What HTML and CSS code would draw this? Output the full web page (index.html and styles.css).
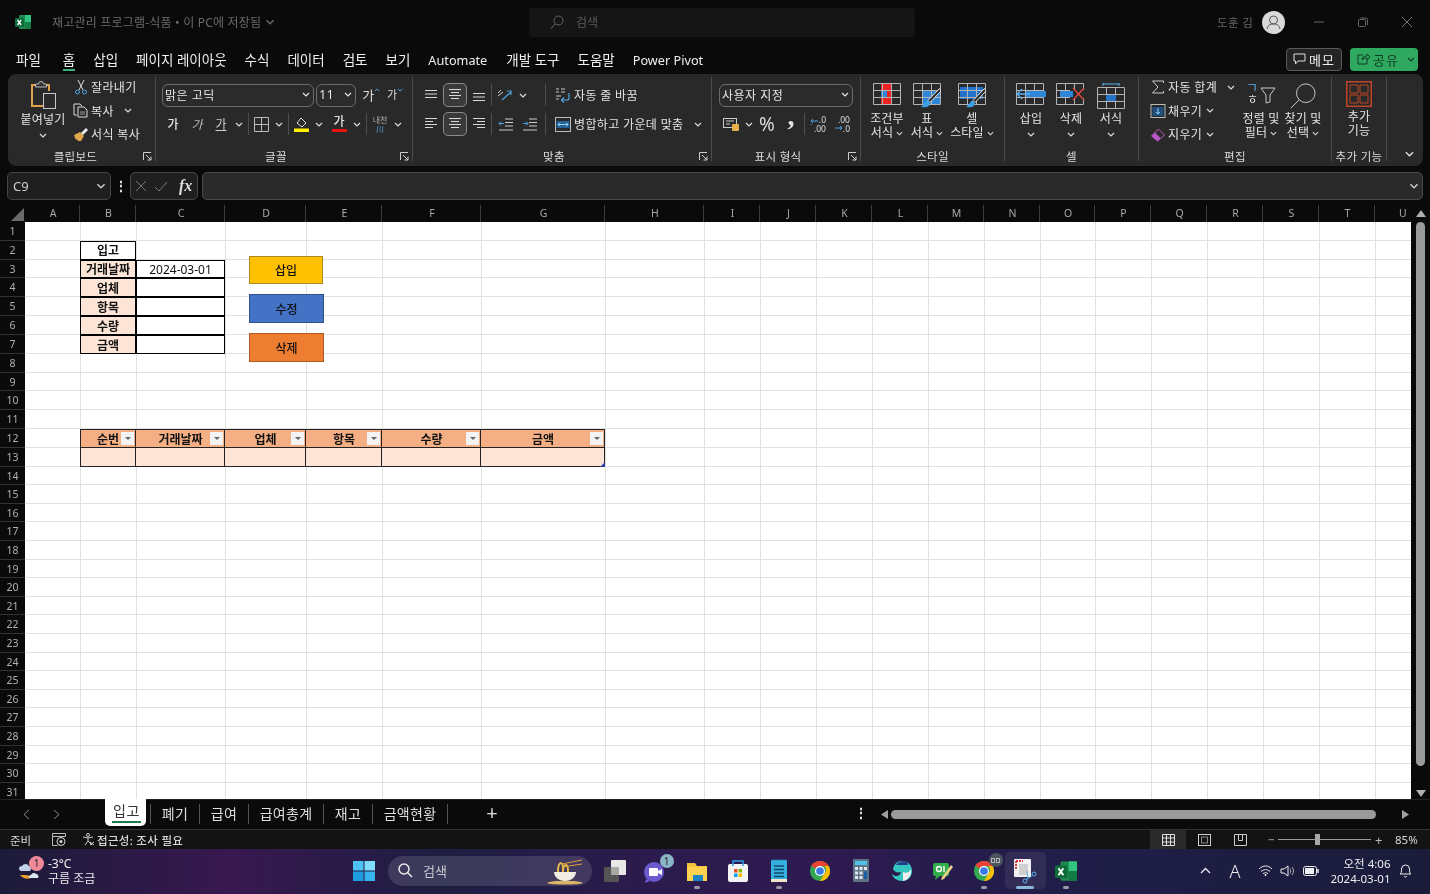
FILE: index.html
```html
<!DOCTYPE html>
<html lang="ko">
<head>
<meta charset="utf-8">
<title>재고관리 프로그램-식품</title>
<link rel="stylesheet" href="styles.css">
</head>
<body>
<svg class="defs" width="0" height="0" aria-hidden="true">
  <symbol id="ch" viewBox="0 0 8 5"><path d="M1 1l3 3 3-3" fill="none" stroke="currentColor" stroke-width="1.2"/></symbol>
  <symbol id="launch" viewBox="0 0 9 9"><path d="M.5 8V.5H8M3 3l5 5M8 4.5V8H4.500" fill="none" stroke="#cfcfcf"/></symbol>
  <symbol id="excel" viewBox="0 0 16 16"><rect x="4" y="1" width="12" height="14" rx="1" fill="#1f8a50"/><rect x="10" y="1" width="6" height="7" fill="#33c481"/><rect x="10" y="8" width="6" height="7" fill="#107c41"/><rect x="0" y="4" width="9" height="9" rx="1" fill="#0f6b39"/><path d="M2.500 6l3.600 5M6.100 6l-3.600 5" stroke="#fff" stroke-width="1.300"/></symbol>
  <symbol id="chrome" viewBox="0 0 24 24"><circle cx="12" cy="12" r="11" fill="#34a853"/><path d="M12 1a11 11 0 0 1 9.500 5.500H12a5.500 5.500 0 0 0-4.800 2.800L2.500 6A11 11 0 0 1 12 1z" fill="#ea4335"/><path d="M21.500 6.500A11 11 0 0 1 12 23l4.800-8.200a5.500 5.500 0 0 0 0-8.300z" fill="#fbbc04"/><circle cx="12" cy="12" r="5.500" fill="#fff"/><circle cx="12" cy="12" r="4.200" fill="#3b78e7"/></symbol>
  <symbol id="lines-t" viewBox="0 0 14 14"><path d="M1 2.500h12M1 6h12M1 9.500h12" stroke="#d8d8d8"/></symbol>
  <symbol id="lines-l" viewBox="0 0 14 14"><path d="M1 1.500h12M1 4.500h8M1 7.500h12M1 10.500h8" stroke="#d8d8d8"/></symbol>
  <symbol id="lines-c" viewBox="0 0 14 14"><path d="M1 1.500h12M3 4.500h8M1 7.500h12M3 10.500h8" stroke="#d8d8d8"/></symbol>
  <symbol id="lines-r" viewBox="0 0 14 14"><path d="M1 1.500h12M5 4.500h8M1 7.500h12M5 10.500h8" stroke="#d8d8d8"/></symbol>
  <symbol id="grid28" viewBox="0 0 28 22"><path d="M.5.500h27v21H.500zM9.500.500v21M18.500.500v21M.500 7.500h27M.500 14.500h27" fill="none" stroke="#b4b4b4"/></symbol>
  <symbol id="brush" viewBox="0 0 28 26"><path d="M26.500 5.500L15 17.500l2 2L28 8z" fill="#2a2a2a" stroke="#e4e4e4"/><path d="M15 17.500c-3 .5-3 4-7 6 4 2 9 .5 9-4z" fill="#3aa0ea"/></symbol>
</svg>

<div class="app">
  <header class="titlebar">
    <div class="tb-left">
      <svg class="tb-logo" width="16" height="16"><use href="#excel"/></svg>
      <span class="tb-title">재고관리 프로그램-식품 • 이 PC에 저장됨</span>
      <svg class="tb-ch" width="10" height="6"><use href="#ch"/></svg>
    </div>
    <div class="tb-search">
      <svg width="14" height="15" viewBox="0 0 14 15"><circle cx="8.500" cy="5.500" r="4.500" fill="none" stroke="#666"/><path d="M5 9l-4 5" stroke="#666"/></svg>
      <span>검색</span>
    </div>
    <div class="tb-right">
      <span class="tb-user">도훈 김</span>
      <svg class="tb-avatar" width="23" height="23" viewBox="0 0 23 23"><circle cx="11.500" cy="11.500" r="11.500" fill="#d9d9d9"/><circle cx="11.500" cy="9" r="4" fill="none" stroke="#555"/><path d="M5 18c1-4 3-5 6.500-5s5.500 1 6.500 5" fill="none" stroke="#555"/></svg>
      <svg class="win-btn" width="10" height="10" viewBox="0 0 10 10"><path d="M0 5h10" stroke="#666"/></svg>
      <svg class="win-btn" width="10" height="10" viewBox="0 0 10 10"><rect x=".5" y="2.500" width="7" height="7" rx="1" fill="none" stroke="#666"/><path d="M2.500 1h5.500a1.500 1.500 0 0 1 1.500 1.500V8" fill="none" stroke="#666"/></svg>
      <svg class="win-btn" width="10" height="10" viewBox="0 0 10 10"><path d="M0 0l10 10M10 0L0 10" stroke="#777"/></svg>
    </div>
  </header>

  <nav class="menubar">
    <span class="m-item m-file">파일</span>
    <span class="m-item m-home">홈</span>
    <span class="m-item">삽입</span>
    <span class="m-item">페이지 레이아웃</span>
    <span class="m-item">수식</span>
    <span class="m-item">데이터</span>
    <span class="m-item">검토</span>
    <span class="m-item">보기</span>
    <span class="m-item m-lat">Automate</span>
    <span class="m-item">개발 도구</span>
    <span class="m-item">도움말</span>
    <span class="m-item m-lat">Power Pivot</span>
    <span class="m-spacer"></span>
    <button class="memo"><svg width="13" height="12" viewBox="0 0 13 12"><path d="M1 1h11v7H5l-2.500 3V8H1z" fill="none" stroke="#ddd"/></svg>메모</button>
    <button class="share"><svg width="13" height="12" viewBox="0 0 13 12"><path d="M6 2H1v9h9V7M5 7c0-3 2-4 5-4V1l3 3-3 3V5C8 5 6 5 5 7z" fill="none" stroke="#0e3f22"/></svg>공유<svg class="share-ch" width="8" height="5"><use href="#ch"/></svg></button>
  </nav>

  <section class="ribbon">
    <div class="group g-clip">
      <div class="g-body clip-body">
        <div class="big paste">
          <svg width="27" height="30" viewBox="0 0 27 30"><path d="M5 4H2v21h14" fill="none" stroke="#dca24b" stroke-width="2"/><path d="M15 4h4v6" fill="none" stroke="#dca24b" stroke-width="2"/><path d="M5.500 6V3h3a2.500 2.500 0 0 1 5 0h3v3z" fill="#333" stroke="#bbb"/><rect x="13.500" y="12.500" width="12" height="15" fill="#2b2b2b" stroke="#c8c8c8"/></svg>
          <span class="big-label">붙여넣기</span>
          <svg class="big-ch" width="8" height="5"><use href="#ch"/></svg>
        </div>
        <div class="small-col">
          <div class="small"><svg width="16" height="16" viewBox="0 0 14 16"><path d="M4 1l5 10M10 1L5 11" stroke="#ddd"/><circle cx="3.500" cy="13" r="2" fill="none" stroke="#4fa3e0"/><circle cx="10.500" cy="13" r="2" fill="none" stroke="#4fa3e0"/></svg>잘라내기</div>
          <div class="small"><svg width="16" height="15" viewBox="0 0 16 15"><path d="M4 12H1V1h6l2 2" fill="none" stroke="#ddd"/><path d="M5 4h6l3 3v7H5z" fill="none" stroke="#ddd"/><path d="M7 9h5M7 11h5" stroke="#999"/></svg>복사<svg class="s-ch copy-ch" width="8" height="5"><use href="#ch"/></svg></div>
          <div class="small"><svg width="16" height="15" viewBox="0 0 16 15"><path d="M1 8l6-3 4 4-3 5H5l-1-2-1 1-1-2z" fill="#e0a84a"/><path d="M8 6l5-5 2 2-5 5z" fill="#eee"/></svg>서식 복사</div>
        </div>
      </div>
      <div class="g-label launch-pad">클립보드</div>
      <svg class="launcher" width="9" height="9"><use href="#launch"/></svg>
    </div>

    <div class="group g-font">
      <div class="g-body stack">
        <div class="row">
          <div class="select sel-font">맑은 고딕<svg width="8" height="5"><use href="#ch"/></svg></div>
          <div class="select sel-size">11<svg width="8" height="5"><use href="#ch"/></svg></div>
          <span class="grow-a">가<svg class="up" width="6" height="4"><use href="#ch"/></svg></span>
          <span class="grow-a shrink">가<svg class="dn" width="6" height="4"><use href="#ch"/></svg></span>
        </div>
        <div class="row row-2 font-row">
          <span class="tool f-b">가</span>
          <span class="tool f-i">가</span>
          <span class="tool f-u">가</span>
          <span class="chev"><svg width="8" height="5"><use href="#ch"/></svg></span>
          <i class="sep s3"></i>
          <span class="tool"><svg width="15" height="15" viewBox="0 0 15 15"><path d="M.5.500h14v14H.500zM7.500.500v14M.500 7.500h14" fill="none" stroke="#bbb"/></svg></span>
          <span class="chev"><svg width="8" height="5"><use href="#ch"/></svg></span>
          <i class="sep s3"></i>
          <span class="tool"><svg width="15" height="16" viewBox="0 0 15 16"><path d="M3 7l4-5 5 5-4 4z" fill="none" stroke="#ddd"/><rect y="12.500" width="15" height="3.500" fill="#ffef00"/></svg></span>
          <span class="chev"><svg width="8" height="5"><use href="#ch"/></svg></span>
          <span class="tool t-color">가</span>
          <span class="chev"><svg width="8" height="5"><use href="#ch"/></svg></span>
          <i class="sep s3"></i>
          <span class="tool t-phon">내천<b>川</b></span>
          <span class="chev"><svg width="8" height="5"><use href="#ch"/></svg></span>
        </div>
      </div>
      <div class="g-label launch-pad">글꼴</div>
      <svg class="launcher" width="9" height="9"><use href="#launch"/></svg>
    </div>

    <div class="group g-align">
      <div class="g-body stack">
        <div class="row">
          <span class="tool"><svg width="14" height="14"><use href="#lines-t"/></svg></span>
          <span class="tool boxed"><svg width="14" height="14"><use href="#lines-c"/></svg></span>
          <span class="tool tool-low"><svg width="14" height="14"><use href="#lines-t"/></svg></span>
          <i class="sep s1"></i>
          <span class="tool"><svg width="16" height="14" viewBox="0 0 16 14"><path d="M1 8l5-4M1 5l3-3" stroke="#ccc"/><path d="M5 12l9-8M10 3h4v4" fill="none" stroke="#4fa3e0" stroke-width="1.200"/></svg></span>
          <span class="chev"><svg width="8" height="5"><use href="#ch"/></svg></span>
          <i class="sep s-wrap"></i>
          <div class="labelled"><svg width="16" height="16" viewBox="0 0 16 16"><path d="M1 2h3M1 5h3M6 2h4M6 5h4M1 9h5M1 12h3" stroke="#ccc"/><path d="M14 6v5a2 2 0 0 1-2 2H7M9 10.500L6.500 13 9 15.500" fill="none" stroke="#4fa3e0" stroke-width="1.200"/></svg>자동 줄 바꿈</div>
        </div>
        <div class="row row-2">
          <span class="tool"><svg width="14" height="14"><use href="#lines-l"/></svg></span>
          <span class="tool boxed"><svg width="14" height="14"><use href="#lines-c"/></svg></span>
          <span class="tool"><svg width="14" height="14"><use href="#lines-r"/></svg></span>
          <i class="sep s1"></i>
          <span class="tool"><svg width="15" height="13" viewBox="0 0 15 13"><path d="M7 1h8M7 4.500h8M7 8h8M1 12h14" stroke="#ccc"/><path d="M6 5.500H1M3 3.500L1 5.500l2 2" fill="none" stroke="#4fa3e0"/></svg></span>
          <span class="tool"><svg width="15" height="13" viewBox="0 0 15 13"><path d="M7 1h8M7 4.500h8M7 8h8M1 12h14" stroke="#ccc"/><path d="M1 5.500h5M4 3.500l2 2-2 2" fill="none" stroke="#4fa3e0"/></svg></span>
          <i class="sep s-merge"></i>
          <div class="labelled"><svg width="16" height="15" viewBox="0 0 16 15"><rect x=".5" y=".5" width="15" height="14" fill="none" stroke="#bbb"/><rect x="1.500" y="4" width="13" height="7" fill="#1f5f94"/><path d="M3 7.500h10M5 5.500l-2 2 2 2M11 5.500l2 2-2 2" fill="none" stroke="#9fd3f5"/></svg>병합하고 가운데 맞춤<svg class="merge-ch" width="8" height="5"><use href="#ch"/></svg></div>
        </div>
      </div>
      <div class="g-label launch-pad">맞춤</div>
      <svg class="launcher" width="9" height="9"><use href="#launch"/></svg>
    </div>

    <div class="group g-num">
      <div class="g-body stack">
        <div class="row">
          <div class="select sel-fmt">사용자 지정<svg width="8" height="5"><use href="#ch"/></svg></div>
        </div>
        <div class="row row-2">
          <span class="tool"><svg width="17" height="15" viewBox="0 0 17 15"><rect x=".5" y="1.500" width="13" height="9" fill="none" stroke="#ccc"/><path d="M3 4h8M3 7h4" stroke="#ccc"/><rect x="9" y="7" width="7" height="7" rx="1" fill="#e8b04a"/></svg></span>
          <span class="chev"><svg width="8" height="5"><use href="#ch"/></svg></span>
          <span class="tool t-pct">%</span>
          <span class="tool t-comma">,</span>
          <i class="sep s1n"></i>
          <span class="tool t-dec"><svg width="16" height="15" viewBox="0 0 16 15"><path d="M8 4H1M3 2L1 4l2 2M1 7v1" fill="none" stroke="#4fa3e0"/></svg><em>.0<br>.00</em></span>
          <span class="tool t-dec"><svg width="16" height="15" viewBox="0 0 16 15"><path d="M1 11h7M6 9l2 2-2 2" fill="none" stroke="#4fa3e0"/></svg><em>.00<br>.0</em></span>
        </div>
      </div>
      <div class="g-label launch-pad">표시 형식</div>
      <svg class="launcher" width="9" height="9"><use href="#launch"/></svg>
    </div>

    <div class="group g-style">
      <div class="g-body bigs">
        <div class="big b40">
          <svg width="28" height="26" viewBox="0 0 28 26"><path fill="#ee2222" d="M8 0h11v7H8zM14 7h5v7h-5zM8 14h11v8H8z"/><path fill="#2e86d8" d="M8 7h6v7H8z"/><use href="#grid28" width="28" height="22"/></svg>
          <span class="big-label">조건부<br>서식<svg class="i-ch" width="7" height="5"><use href="#ch"/></svg></span>
        </div>
        <div class="big b40">
          <svg width="28" height="26" viewBox="0 0 28 26"><path fill="#2e86d8" d="M9 7h18v14H9z"/><use href="#grid28" width="28" height="22"/><use href="#brush" width="28" height="26"/></svg>
          <span class="big-label">표<br>서식<svg class="i-ch" width="7" height="5"><use href="#ch"/></svg></span>
        </div>
        <div class="big b50">
          <svg width="28" height="26" viewBox="0 0 28 26"><path fill="#2273c9" d="M2 4h23v12H2z"/><use href="#grid28" width="28" height="22"/><use href="#brush" width="28" height="26"/></svg>
          <span class="big-label">셀<br>스타일<svg class="i-ch" width="7" height="5"><use href="#ch"/></svg></span>
        </div>
      </div>
      <div class="g-label">스타일</div>
    </div>

    <div class="group g-cell">
      <div class="g-body bigs">
        <div class="big b40">
          <svg width="30" height="26" viewBox="0 0 30 26"><use href="#grid28" width="28" height="22"/><path fill="#2e86d8" d="M10 8h20v6H10z"/><path d="M14 11H1M6 6l-5 5 5 5" fill="none" stroke="#5cb0f0" stroke-width="1.300"/></svg>
          <span class="big-label">삽입</span>
          <svg class="big-ch" width="8" height="5"><use href="#ch"/></svg>
        </div>
        <div class="big b40">
          <svg width="30" height="26" viewBox="0 0 30 26"><use href="#grid28" width="28" height="22"/><path fill="#292929" d="M14 7h15v8H14z"/><path fill="#2e86d8" d="M4 8h13v6H4z"/><path d="M17 5l11 12M28 5L17 17" stroke="#e2483d" stroke-width="1.300"/></svg>
          <span class="big-label">삭제</span>
          <svg class="big-ch" width="8" height="5"><use href="#ch"/></svg>
        </div>
        <div class="big b40">
          <svg width="28" height="26" viewBox="0 0 28 26"><path d="M6 1h16M6 0v3M22 0v3" stroke="#5cb0f0"/><g transform="translate(0 4)"><use href="#grid28" width="28" height="22"/><path fill="#2273c9" d="M9 8h10v6H9z"/></g></svg>
          <span class="big-label">서식</span>
          <svg class="big-ch" width="8" height="5"><use href="#ch"/></svg>
        </div>
      </div>
      <div class="g-label">셀</div>
    </div>

    <div class="group g-edit">
      <div class="g-body edit-body">
        <div class="small-col edit-col">
          <div class="small"><svg width="16" height="14" viewBox="0 0 13 14"><path d="M12 3V1H1l5.500 6L1 13h11v-2" fill="none" stroke="#ccc"/></svg>자동 합계<svg class="s-ch e-ch" width="8" height="5"><use href="#ch"/></svg></div>
          <div class="small"><svg width="16" height="14" viewBox="0 0 15 14"><rect x=".5" y=".5" width="14" height="13" fill="none" stroke="#bbb"/><rect x="2" y="3" width="11" height="9" fill="#1f4f7a"/><path d="M7.500 4v6M5.500 8l2 2 2-2" fill="none" stroke="#8ed0f8"/></svg>채우기<svg class="s-ch" width="8" height="5"><use href="#ch"/></svg></div>
          <div class="small"><svg width="16" height="15" viewBox="0 0 15 15"><path d="M1 9l7-7 6 6-7 6z" fill="none" stroke="#c05cc0"/><path d="M1 9l3.500-3.500 6 6L7 14z" fill="#b857c8"/></svg>지우기<svg class="s-ch" width="8" height="5"><use href="#ch"/></svg></div>
        </div>
        <div class="big b42">
          <span class="sort-ic"><i class="sort-k">ㄱ</i><i class="sort-h">ㅎ</i><svg width="16" height="17" viewBox="0 0 16 17"><path d="M1 1h14L10 8v7l-4 1V8z" fill="none" stroke="#c8c8c8"/></svg></span>
          <span class="big-label">정렬 및<br>필터<svg class="i-ch" width="7" height="5"><use href="#ch"/></svg></span>
        </div>
        <div class="big b42">
          <svg width="28" height="26" viewBox="0 0 28 28"><circle cx="17" cy="11" r="10" fill="none" stroke="#d0d0d0"/><path d="M10 18L1 27" stroke="#d0d0d0"/></svg>
          <span class="big-label">찾기 및<br>선택<svg class="i-ch" width="7" height="5"><use href="#ch"/></svg></span>
        </div>
      </div>
      <div class="g-label">편집</div>
    </div>

    <div class="group g-add">
      <div class="g-body bigs">
        <div class="big b54">
          <svg class="add-ic" width="26" height="26" viewBox="0 0 26 26"><path d="M.750.750h24.500v24.500H.750z" fill="none" stroke="#bf4526" stroke-width="1.500"/><path d="M4 4h8v8H4zM14 4h8v8h-8zM4 14h8v8H4zM14 14h8v8h-8z" fill="none" stroke="#bf4526"/></svg>
          <span class="big-label">추가<br>기능</span>
        </div>
      </div>
      <div class="g-label">추가 기능</div>
    </div>
    <svg class="rb-collapse" width="11" height="6"><use href="#ch"/></svg>
  </section>

  <section class="formula">
    <div class="namebox">C9<svg width="10" height="6"><use href="#ch"/></svg></div>
    <div class="fdots">⋮</div>
    <div class="fbtns">
      <svg width="12" height="12" viewBox="0 0 12 12"><path d="M1 1l10 10M11 1L1 11" stroke="#777"/></svg>
      <svg width="14" height="11" viewBox="0 0 14 11"><path d="M1 6l4 4 8-9" fill="none" stroke="#777"/></svg>
      <span class="fx">fx</span>
    </div>
    <div class="finput"><svg width="10" height="6"><use href="#ch"/></svg></div>
  </section>

  <main class="book">
    <div class="corner"><svg width="13" height="13" viewBox="0 0 13 13"><path d="M13 0v13H0z" fill="#6a6a6a"/></svg></div>
    <div class="colheads">
      <span>A</span><span>B</span><span>C</span><span>D</span><span>E</span><span>F</span><span>G</span><span>H</span><span>I</span><span>J</span><span>K</span><span>L</span><span>M</span><span>N</span><span>O</span><span>P</span><span>Q</span><span>R</span><span>S</span><span>T</span><span class="ch-u">U</span>
    </div>
    <div class="vscroll">
      <svg width="10" height="7" viewBox="0 0 10 7"><path d="M5 0l5 7H0z" fill="#b0b0b0"/></svg>
      <div class="v-thumb"></div>
      <svg width="10" height="7" viewBox="0 0 10 7"><path d="M5 7L0 0h10z" fill="#b0b0b0"/></svg>
    </div>
    <div class="rowheads">
      <span>1</span><span>2</span><span>3</span><span>4</span><span>5</span><span>6</span><span>7</span><span>8</span><span>9</span><span>10</span><span>11</span><span>12</span><span>13</span><span>14</span><span>15</span><span>16</span><span>17</span><span>18</span><span>19</span><span>20</span><span>21</span><span>22</span><span>23</span><span>24</span><span>25</span><span>26</span><span>27</span><span>28</span><span>29</span><span>30</span><span>31</span>
    </div>
    <div class="sheet">
      <div class="r"></div>
      <div class="r"><div class="cell tb cb strong">입고</div></div>
      <div class="r"><div class="cell tb cb strong lab">거래날짜</div><div class="cell tb cc">2024-03-01</div></div>
      <div class="r"><div class="cell tb cb strong lab">업체</div><div class="cell tb cc"></div></div>
      <div class="r"><div class="cell tb cb strong lab">항목</div><div class="cell tb cc"></div></div>
      <div class="r"><div class="cell tb cb strong lab">수량</div><div class="cell tb cc"></div></div>
      <div class="r"><div class="cell tb cb strong lab">금액</div><div class="cell tb cc"></div></div>
      <div class="r"></div><div class="r"></div><div class="r"></div><div class="r"></div>
      <div class="r">
        <div class="cell th cb strong">순번<i class="flt"></i></div>
        <div class="cell th cc strong">거래날짜<i class="flt"></i></div>
        <div class="cell th cd strong">업체<i class="flt"></i></div>
        <div class="cell th ce strong">항목<i class="flt"></i></div>
        <div class="cell th cf strong">수량<i class="flt"></i></div>
        <div class="cell th cg strong">금액<i class="flt"></i></div>
      </div>
      <div class="r">
        <div class="cell td cb"></div><div class="cell td cc"></div><div class="cell td cd"></div><div class="cell td ce"></div><div class="cell td cf"></div><div class="cell td cg"><i class="resize"></i></div>
      </div>
      <div class="r"></div><div class="r"></div><div class="r"></div><div class="r"></div><div class="r"></div><div class="r"></div><div class="r"></div><div class="r"></div><div class="r"></div><div class="r"></div><div class="r"></div><div class="r"></div><div class="r"></div><div class="r"></div><div class="r"></div><div class="r"></div><div class="r"></div>
      <div class="r"></div>
      <div class="shape sh-insert">삽입</div>
      <div class="shape sh-edit">수정</div>
      <div class="shape sh-delete">삭제</div>
    </div>
  </main>

  <section class="sheetbar">
    <svg class="nav" width="7" height="11" viewBox="0 0 7 11"><path d="M6 1L1 5.500 6 10" fill="none" stroke="#888"/></svg>
    <svg class="nav nav2" width="7" height="11" viewBox="0 0 7 11"><path d="M1 1l5 4.500L1 10" fill="none" stroke="#888"/></svg>
    <div class="tab-active"><span>입고</span></div>
    <div class="tab t49"><span>폐기</span></div>
    <div class="tab t49"><span>급여</span></div>
    <div class="tab t75"><span>급여총계</span></div>
    <div class="tab t49"><span>재고</span></div>
    <div class="tab t76"><span>금액현황</span></div>
    <div class="addsheet">+</div>
    <div class="hdots">⋮</div>
    <div class="hscroll">
      <svg width="7" height="9" viewBox="0 0 7 9"><path d="M0 4.500L7 0v9z" fill="#a0a0a0"/></svg>
      <div class="h-thumb"></div>
      <svg width="7" height="9" viewBox="0 0 7 9"><path d="M7 4.500L0 9V0z" fill="#a0a0a0"/></svg>
    </div>
  </section>

  <footer class="status">
    <span class="st-ready">준비</span>
    <svg class="st-macro" width="14" height="13" viewBox="0 0 14 13"><path d="M.5.500h13v3H.500zM.500 3.500v9h5" fill="none" stroke="#bbb"/><circle cx="9" cy="8.500" r="4" fill="none" stroke="#ddd"/><circle cx="9" cy="8.500" r="1.500" fill="#ddd"/></svg>
    <svg class="st-acc" width="13" height="13" viewBox="0 0 13 13"><circle cx="6" cy="2" r="1.500" fill="none" stroke="#ccc"/><path d="M1 4l5 1 5-1M6 5v3L3 12M6 8l4 4M8 9l4 3M12 9l-4 3" fill="none" stroke="#ccc"/></svg>
    <span class="st-text">접근성: 조사 필요</span>
    <span class="st-space"></span>
    <div class="view on"><svg width="13" height="12" viewBox="0 0 13 12"><path d="M.5.500h12v11H.500zM4.500.500v11M8.500.500v11M.500 4h12M.500 8h12" fill="none" stroke="#ddd"/></svg></div>
    <div class="view v-page"><svg width="13" height="12" viewBox="0 0 13 12"><rect x=".5" y=".5" width="12" height="11" fill="none" stroke="#ccc"/><rect x="3.500" y="3" width="6" height="6" fill="none" stroke="#888"/></svg></div>
    <div class="view v-break"><svg width="13" height="12" viewBox="0 0 13 12"><path d="M.5.500h12v11H.500zM4.500.500v6h4v-6" fill="none" stroke="#ccc"/></svg></div>
    <span class="zm-minus">−</span>
    <div class="zm-track"><i class="zm-thumb"></i></div>
    <span class="zm-plus">+</span>
    <span class="zm-val">85%</span>
  </footer>

  <footer class="taskbar">
    <div class="weather">
      <span class="w-icon">
        <svg width="24" height="24" viewBox="0 0 24 24"><path d="M1 10a3 3 0 0 1 3-3 4 4 0 0 1 7 0 3 3 0 0 1 1 5H3a2.500 2.500 0 0 1-2-2z" fill="#c3d2e8"/><path d="M2 16c4 5 11 5 14 0-3 1-6 1-8 0z" fill="#f0a030"/><path d="M11 19a2.500 2.500 0 0 1 2-3 3 3 0 0 1 5-1 2.500 2.500 0 0 1 2 4z" fill="#dbe5f2"/></svg>
        <b class="w-badge">1</b>
      </span>
      <div class="w-text"><span>-3°C</span><span>구름 조금</span></div>
    </div>
    <div class="slot win"><svg width="22" height="22" viewBox="0 0 22 22"><path fill="#4dc3f5" d="M0 1h10.500v9.500H0z"/><path fill="#7fdcfb" d="M11.500 1H22v9.500H11.500z"/><path fill="#1f9be0" d="M0 11.500h10.500V21H0z"/><path fill="#38b5ee" d="M11.500 11.500H22V21H11.500z"/></svg></div>
    <div class="t-search">
      <svg width="15" height="15" viewBox="0 0 15 15"><circle cx="6" cy="6" r="5" fill="none" stroke="#e8e8e8" stroke-width="1.500"/><path d="M9.500 9.500l4.500 4.500" stroke="#e8e8e8" stroke-width="1.500"/></svg>
      <span>검색</span>
      <svg class="noodle" width="38" height="28" viewBox="0 0 38 28"><path d="M1 26c3-3 33-3 36 0-3 2-33 2-36 0z" fill="#dcb566"/><path d="M8 15h22c0 5-5 9-11 9S8 20 8 15z" fill="#f0ece2"/><path d="M12 15c0-5 1-9 3-9s2 5 2 9M17 15c0-4 1-7 3-7s2 4 2 7" fill="none" stroke="#e8b84a" stroke-width="2"/><path d="M16 7l20-4M16 10l20-3" stroke="#d99f3d"/></svg>
    </div>
    <div class="apps">
      <div class="slot"><svg width="24" height="24" viewBox="0 0 24 24"><rect x="1" y="8" width="15" height="15" rx="1" fill="#555"/><rect x="8" y="1" width="15" height="15" rx="1" fill="#e8e8e8"/><rect x="8" y="8" width="8" height="8" fill="#a8a8a8"/></svg></div>
      <div class="slot"><svg width="26" height="24" viewBox="0 0 26 24"><circle cx="11" cy="13" r="10" fill="#6a5acd"/><path d="M3 20l-1 4 5-2z" fill="#6a5acd"/><rect x="6" y="9" width="9" height="8" rx="1" fill="#fff"/><path d="M15 12l4-2v6l-4-2z" fill="#fff"/></svg><b class="b-count">1</b></div>
      <div class="slot"><svg width="24" height="24" viewBox="0 0 24 24"><path d="M2 4h8l2 3h10v15H2z" fill="#f5c43d"/><path d="M2 8h20v14H2z" fill="#ffd34f"/><rect x="8" y="16" width="10" height="6" fill="#1b84c7"/></svg><i class="dot"></i></div>
      <div class="slot"><svg width="22" height="24" viewBox="0 0 22 24"><rect x="1" y="5" width="20" height="18" rx="2" fill="#f4f4f4"/><path d="M6 7V2h10v5" fill="none" stroke="#2aa0e8" stroke-width="1.500"/><rect x="7" y="10" width="3.500" height="3.500" fill="#f25022"/><rect x="11.500" y="10" width="3.500" height="3.500" fill="#7fba00"/><rect x="7" y="14.500" width="3.500" height="3.500" fill="#00a4ef"/><rect x="11.500" y="14.500" width="3.500" height="3.500" fill="#ffb900"/></svg></div>
      <div class="slot"><svg width="16" height="24" viewBox="0 0 16 24"><rect y="1" width="16" height="22" rx="1" fill="#35b1e0"/><path d="M3 7h10M3 10.500h10M3 14h10M3 17.500h10" stroke="#12496b" stroke-width="1.300"/><rect y="20" width="16" height="3" fill="#f0e3c8"/><path d="M2 0v2M5 0v2M8 0v2M11 0v2M14 0v2" stroke="#2a7fa8"/></svg><i class="dot"></i></div>
      <div class="slot"><svg width="22" height="22"><use href="#chrome"/></svg></div>
      <div class="slot"><svg width="16" height="24" viewBox="0 0 16 24"><rect width="16" height="23" rx="1" fill="#5f7387"/><rect x="2" y="2" width="12" height="4" fill="#4fc0e8"/><path fill="#dfe6ec" d="M2 8h3v3H2zM6.500 8h3v3h-3zM11 8h3v3h-3zM2 12.500h3v3H2zM6.500 12.500h3v3h-3zM2 17h3v3H2zM6.500 17h3v3h-3z"/><rect x="11" y="12.500" width="3" height="7.500" fill="#1b5fa8"/></svg></div>
      <div class="slot"><svg width="22" height="22" viewBox="0 0 22 22"><path d="M11 1c6 0 10 4 10 10s-4 10-10 10C6 21 2 18 1 14c3 3 8 3 9-2-3 1-7 0-8-3 1-5 4-8 9-8z" fill="#35c6c0"/><path d="M5 5c2-3 5-4 8-4s4 2 4 4H7z" fill="#27408b"/><path d="M12 12c3 2 7 0 8-3 1 5-2 11-8 12z" fill="#eee"/></svg></div>
      <div class="slot"><svg width="22" height="20" viewBox="0 0 22 20"><rect x="1" y="2" width="16" height="13" rx="2" fill="#2fae4a"/><path d="M4 15l-1 4 5-4z" fill="#2fae4a"/><circle cx="7" cy="8" r="2.500" fill="none" stroke="#fff" stroke-width="1.400"/><path d="M12 5v6" stroke="#fff" stroke-width="1.400"/><path d="M10 16l9-12 2 2-9 12-3 1z" fill="#e8cf8a"/></svg></div>
      <div class="slot"><svg width="22" height="22"><use href="#chrome"/></svg><b class="b-ko"><u></u><u></u></b><i class="dot"></i></div>
      <div class="slot active"><svg width="24" height="26" viewBox="0 0 24 26"><rect x="1" y="1" width="17" height="18" rx="1" fill="#f2f2f2"/><path d="M3 3h7M3 3v8" stroke="#d63a3a" stroke-width="2" stroke-dasharray="2 1"/><rect x="6" y="6" width="9" height="11" fill="#cfcfcf"/><circle cx="12" cy="23" r="2" fill="none" stroke="#5cb0f0"/><circle cx="21" cy="16" r="2" fill="none" stroke="#5cb0f0"/><path d="M13 22l7-5M14 13l1 8" stroke="#5cb0f0"/></svg><i class="dot long"></i></div>
      <div class="slot"><svg width="22" height="22"><use href="#excel"/></svg><i class="dot"></i></div>
    </div>
    <div class="tray">
      <svg class="tr-caret" width="11" height="7" viewBox="0 0 11 7"><path d="M1 6l4.500-4.500L10 6" fill="none" stroke="#eee" stroke-width="1.300"/></svg>
      <span class="tr-ime">A</span>
      <svg class="tr-wifi" width="15" height="11" viewBox="0 0 15 11"><path d="M1 4c4-4 9-4 13 0M3 6.500c3-2.500 6-2.500 9 0M5 8.700c2-1.300 3-1.300 5 0" fill="none" stroke="#eee"/><circle cx="7.500" cy="10" r="1" fill="#eee"/></svg>
      <svg class="tr-vol" width="15" height="12" viewBox="0 0 15 12"><path d="M1 4h3l4-3v10L4 8H1z" fill="none" stroke="#eee"/><path d="M10 3.500c1 1.500 1 3.500 0 5M12 2c2 2.500 2 5.500 0 8" fill="none" stroke="#aaa"/></svg>
      <svg class="tr-bat" width="16" height="10" viewBox="0 0 16 10"><rect x=".5" y=".5" width="13" height="9" rx="2" fill="none" stroke="#eee"/><rect x="2" y="2" width="9" height="6" fill="#eee"/><path d="M15 3v4" stroke="#eee" stroke-width="1.500"/></svg>
      <div class="tr-clock"><span>오전 4:06</span><span>2024-03-01</span></div>
      <svg class="tr-bell" width="13" height="15" viewBox="0 0 13 15"><path d="M1 11c1.500-1 1.500-2 1.500-5a4 4 0 0 1 8 0c0 3 0 4 1.500 5zM5 13c.5 1.300 2.500 1.300 3 0" fill="none" stroke="#eee"/></svg>
    </div>
  </footer>
</div>
</body>
</html>
```
FILE: styles.css
```css
* { box-sizing: border-box; }
html, body { margin: 0; padding: 0; height: 100%; overflow: hidden; background: #0a0a0a; }
body { font-family: "Noto Sans", "Noto Sans CJK KR", sans-serif; font-size: 12px; color: #e4e4e4; }
.defs { position: absolute; }
button { font: inherit; }
svg { display: block; flex: none; }
i, em, b { font-style: normal; }

.app { --cols: 55px 56px 89px 81px 76px 99px 124px 99px 56px 56px 56px 56px 56px 56px 55px 56px 56px 56px 56px 56px 36px;
  width: 1430px; height: 894px; display: flex; flex-direction: column; background: #0a0a0a; overflow: hidden; filter: blur(.3px); }

/* title bar */
.titlebar { height: 44px; flex: none; display: flex; align-items: center; }
.tb-left { width: 529px; display: flex; align-items: center; padding-left: 15px; color: #6a6a6a; }
.tb-logo { margin-right: 21px; }
.tb-title { font-size: 12px; line-height: 16px; letter-spacing: .2px; margin-top: 1px; }
.tb-ch { margin-left: 4px; color: #6a6a6a; }
.tb-search { width: 386px; height: 29px; background: #151515; border-radius: 3px; display: flex; align-items: center; padding-left: 21px; color: #5a5a5a; font-size: 12px; }
.tb-search span { margin-left: 12px; }
.tb-right { flex: 1; display: flex; align-items: center; color: #666; padding-left: 302px; }
.tb-user { font-size: 11.500px; letter-spacing: .4px; width: 45px; }
.win-btn { margin-left: 34px; }
.tb-avatar + .win-btn { margin-left: 29px; }

/* menu */
.menubar { height: 30px; flex: none; display: flex; align-items: center; padding: 1px 12px 0 16px; font-size: 13.500px; color: #f0f0f0; }
.m-item { margin-right: 18px; line-height: 20px; position: relative; white-space: nowrap; }
.m-file { margin-right: 22px; }
.m-lat { font-size: 12.700px; margin-right: 19px; }
.m-home::after { content: ""; position: absolute; left: 0; right: 0; bottom: -1px; height: 2px; background: #3bb07a; }
.m-spacer { flex: 1; }
.memo, .share { height: 23px; border-radius: 4px; display: flex; align-items: center; font-size: 13px; padding: 0; letter-spacing: 1px; margin-top: -1px; }
.memo { width: 56px; background: #242424; border: 1px solid #5a5a5a; color: #eee; gap: 3px; justify-content: center; margin-right: 8px; }
.share { width: 68px; background: #2fa860; border: 0; color: #0e3f22; gap: 3px; padding-left: 7px; }
.share-ch { margin-left: 5px; color: #0e3f22; }

/* ribbon */
.ribbon { height: 92px; flex: none; margin: 0 7px 0 8px; background: #292929; border-radius: 8px; display: flex; padding-top: 3px; position: relative; color: #e4e4e4; }
.group { height: 84px; flex: none; border-right: 1px solid #4a4a4a; display: flex; flex-direction: column; position: relative; padding-left: var(--pl, 0px); }
.g-body { height: 72px; flex: none; }
.g-label { height: 14px; flex: none; line-height: 14px; margin-top: 1px; margin-left: calc(-1 * var(--pl, 0px)); text-align: center; font-size: 11.500px; color: #dcdcdc; letter-spacing: .3px; white-space: nowrap; }
.launch-pad { padding-right: 16px; }
.g-clip .launch-pad { padding-right: 12px; }
.launcher { position: absolute; right: 3px; bottom: 0; }
.g-clip { width: 148px; }
.g-font { width: 257px; --pl: 6px; }
.g-align { width: 299px; --pl: 6px; }
.g-num { width: 149px; --pl: 7px; }
.g-style { width: 144px; --pl: 6px; }
.g-cell { width: 134px; --pl: 6px; }
.g-edit { width: 193px; --pl: 8px; }
.g-add { width: 55px; }
.stack { display: flex; flex-direction: column; padding-top: 6px; }
.row { height: 24px; display: flex; align-items: center; }
.row-2 { margin-top: 5px; }
.font-row { margin-left: -1px; }
.select { height: 23px; border: 1px solid #6c6c6c; border-radius: 6px; display: flex; align-items: center; justify-content: space-between; padding: 0 3px 1px 2px; font-size: 12px; letter-spacing: .5px; background: #2b2b2b; color: #e8e8e8; }
.sel-font { width: 153px; margin-right: 2px; }
.sel-size { width: 40px; margin-right: 6px; }
.sel-fmt { width: 134px; }
.grow-a { width: 25px; display: flex; font-size: 13px; position: relative; color: #ddd; line-height: 16px; }
.grow-a.shrink { font-size: 11px; }
.up { transform: rotate(180deg); color: #5cb0f0; margin-top: 1px; }
.dn { color: #5cb0f0; margin-top: 1px; }
.tool { width: 24px; height: 24px; flex: none; display: flex; align-items: center; justify-content: center; }
.boxed { background: #3a3a3a; border: 1px solid #8a8a8a; border-radius: 5px; }
.tool-low { padding-top: 6px; }
.chev { width: 12px; flex: none; display: flex; justify-content: center; color: #dcdcdc; }
.sep { width: 1px; height: 22px; flex: none; background: #4e4e4e; }
.s3 { margin: 0 0 0 3px; }
.s1 { margin: 0 1px 0 0; }
.s-wrap { margin: 0 9px 0 16px; }
.s-merge { margin: 0 9px 0 4px; }
.s1n { margin: 0 1px 0 1px; }
.f-b { font-weight: 500; font-size: 12px; }
.f-i { font-style: italic; color: #bbb; font-size: 12px; }
.f-u { text-decoration: underline; color: #ccc; font-size: 12px; }
.t-color { margin-left: 2px; font-size: 12px; font-weight: 500; flex-direction: column; line-height: 12px; position: relative; }
.t-color::after { content: ""; width: 15px; height: 3.500px; background: #e81010; margin-top: 1px; }
.t-phon { margin-left: 1px; flex-direction: column; font-size: 8px; line-height: 9px; color: #aaa; }
.t-phon b { color: #5aa7e6; font-weight: 400; }
.t-pct { font-size: 19px; color: #dcdcdc; }
.t-comma { font-family: "Liberation Serif", serif; font-size: 28px; font-weight: 700; line-height: 14px; padding-bottom: 16px; }
.t-dec { position: relative; }
.t-dec em { position: absolute; right: 4px; top: 3px; font-size: 8.500px; line-height: 9px; color: #ddd; text-align: right; }
.labelled { display: flex; align-items: center; gap: 3px; font-size: 12px; letter-spacing: .35px; white-space: nowrap; }
.merge-ch { margin-left: 8px; color: #dcdcdc; }
.clip-body { display: flex; padding-left: 12px; }
.big { display: flex; flex-direction: column; align-items: center; flex: none; padding-top: 6px; }
.paste { width: 46px; }
.paste svg:first-child { margin-top: -2px; }
.paste .big-label { margin-top: 2px; }
.big-label { display: block; text-align: center; font-size: 12px; line-height: 14px; margin-top: 3px; white-space: nowrap; letter-spacing: .2px; }
.big-ch { margin-top: 6px; color: #dcdcdc; }
.i-ch { display: inline-block; margin-left: 3px; vertical-align: 1px; color: #dcdcdc; }
.small-col { display: flex; flex-direction: column; gap: 3.600px; margin-left: 7px; }
.small { height: 20px; display: flex; align-items: center; gap: 2px; font-size: 12px; letter-spacing: .35px; white-space: nowrap; }
.s-ch { margin-left: 2px; color: #dcdcdc; }
.copy-ch { margin-left: 8px; }
.bigs { display: flex; }
.b40 { width: 40px; }
.b42 { width: 42px; }
.b50 { width: 50px; }
.b54 { width: 54px; }
.edit-body { display: flex; }
.edit-col { width: 90px; margin-left: 3px; flex: none; }
.e-ch { margin-left: 8px; }
.sort-ic { display: flex; position: relative; width: 30px; height: 26px; justify-content: flex-end; align-items: flex-start; padding-top: 4px; }
.sort-k { position: absolute; left: 0; top: -2px; color: #5cb0f0; font-size: 13px; line-height: 12px; }
.sort-h { position: absolute; left: 1px; top: 11px; font-size: 12px; line-height: 12px; color: #ddd; }
.add-ic { margin-top: -2px; }
.rb-collapse { position: absolute; left: 1396px; top: 77px; color: #ddd; }

/* formula */
.formula { height: 28px; flex: none; margin-top: 6px; padding: 0 7px; display: flex; align-items: stretch; }
.namebox { width: 104px; background: #1f1f1f; border: 1px solid #454545; border-radius: 5px; display: flex; align-items: center; justify-content: space-between; padding: 0 4px 0 5px; font-size: 13px; color: #ccc; }
.fdots { width: 19px; text-align: center; color: #ddd; font-size: 14px; line-height: 28px; font-weight: 700; }
.fbtns { width: 68px; background: #1f1f1f; border: 1px solid #454545; border-radius: 5px; display: flex; align-items: center; padding-left: 4px; gap: 7px; }
.fx { font-family: "Liberation Serif", serif; font-style: italic; font-weight: 700; font-size: 16px; color: #ddd; margin-left: 4px; }
.finput { flex: 1; margin-left: 4px; background: #2a2a2a; border: 1px solid #4a4a4a; border-radius: 5px; display: flex; align-items: center; justify-content: flex-end; padding-right: 3px; color: #ccc; }

/* sheet */
.book { height: 594px; flex: none; margin-top: 5px; display: grid; grid-template-columns: 25px 1386px 19px; grid-template-rows: 17px 577px; }
.corner { display: flex; justify-content: flex-end; align-items: flex-end; padding: 0 1px 1px 0; background: #0a0a0a; }
.colheads { display: grid; grid-template-columns: var(--cols); background: #0a0a0a; }
.colheads span { text-align: center; font-size: 10.500px; line-height: 17px; color: #a8a8a8; border-right: 1px solid #3d3d3d; padding-left: 2px; }
.colheads .ch-u { text-align: left; padding-left: 24px; border: 0; }
.vscroll { grid-column: 3; grid-row: 1 / 3; display: flex; flex-direction: column; align-items: center; padding-top: 5px; background: #0a0a0a; }
.v-thumb { width: 9px; height: 544px; margin: 5px 0 24px; background: #9a9a9a; border-radius: 5px; }
.rowheads { display: flex; flex-direction: column; overflow: hidden; background: #0a0a0a; }
.rowheads span { height: 18.620px; flex: none; text-align: center; font-size: 10.500px; line-height: 19px; color: #b0b0b0; border-bottom: 1px solid #333; }
.rowheads span:nth-child(-n+13) { height: 18.820px; }
.sheet { position: relative; overflow: hidden; background-color: #fff;
  background-image: linear-gradient(#e1e1e1,#e1e1e1), linear-gradient(#e1e1e1,#e1e1e1), linear-gradient(#e1e1e1,#e1e1e1), linear-gradient(#e1e1e1,#e1e1e1), linear-gradient(#e1e1e1,#e1e1e1), linear-gradient(#e1e1e1,#e1e1e1), linear-gradient(#e1e1e1,#e1e1e1), linear-gradient(#e1e1e1,#e1e1e1), linear-gradient(#e1e1e1,#e1e1e1), linear-gradient(#e1e1e1,#e1e1e1), linear-gradient(#e1e1e1,#e1e1e1), linear-gradient(#e1e1e1,#e1e1e1), linear-gradient(#e1e1e1,#e1e1e1), linear-gradient(#e1e1e1,#e1e1e1), linear-gradient(#e1e1e1,#e1e1e1), linear-gradient(#e1e1e1,#e1e1e1), linear-gradient(#e1e1e1,#e1e1e1), linear-gradient(#e1e1e1,#e1e1e1), linear-gradient(#e1e1e1,#e1e1e1), linear-gradient(#e1e1e1,#e1e1e1);
  background-repeat: no-repeat; background-size: 1px 100%;
  background-position: 55px 0, 111px 0, 200px 0, 281px 0, 357px 0, 456px 0, 580px 0, 679px 0, 735px 0, 791px 0, 847px 0, 903px 0, 959px 0, 1015px 0, 1070px 0, 1126px 0, 1182px 0, 1238px 0, 1294px 0, 1350px 0; }
.r { height: 18.620px; display: grid; grid-template-columns: var(--cols); border-bottom: 1px solid #e1e1e1; }
.r:nth-child(-n+13) { height: 18.820px; }
.cell { margin-bottom: -1px; padding-top: 2.500px; display: flex; align-items: center; justify-content: center; font-size: 12px; line-height: 14px; color: #111; position: relative; background: #fff; }
.tb { box-shadow: inset 0 0 0 1px #000; }
.cb { grid-column: 2; }
.cc { grid-column: 3; }
.cd { grid-column: 4; }
.ce { grid-column: 5; }
.cf { grid-column: 6; }
.cg { grid-column: 7; }
.strong { font-weight: 700; }
.lab { background: #fce4d6; }
.th { background: #f4b084; box-shadow: inset -1px 0 0 #222, inset 0 1px 0 #222, inset 0 -1px 0 #222; }
.td { background: #fce4d6; box-shadow: inset -1px 0 0 #222, inset 0 -1px 0 #222; }
.th.cb { box-shadow: inset -1px 0 0 #222, inset 1px 0 0 #222, inset 0 1px 0 #222, inset 0 -1px 0 #222; }
.td.cb { box-shadow: inset -1px 0 0 #222, inset 1px 0 0 #222, inset 0 -1px 0 #222; }
.flt { position: absolute; right: 2px; top: 3px; width: 13px; height: 13px; background: #f3f3f3; }
.flt::after { content: ""; position: absolute; left: 4px; top: 5px; border: 3px solid transparent; border-top: 3px solid #666; border-bottom: 0; }
.resize { position: absolute; right: 0; bottom: 0; width: 0; height: 0; border-left: 5px solid transparent; border-bottom: 5px solid #2f3f9f; }
.shape { position: absolute; display: flex; align-items: center; justify-content: center; font-size: 12px; font-weight: 500; color: #111; }
.sh-insert { left: 224px; top: 34px; width: 74px; height: 28px; background: #ffc000; border: 1px solid #a98a20; }
.sh-edit { left: 224px; top: 72px; width: 75px; height: 29px; background: #4472c4; border: 1px solid #2f528f; }
.sh-delete { left: 224px; top: 111px; width: 75px; height: 29px; background: #ed7d31; border: 1px solid #ae5a21; }

/* sheet tabs */
.sheetbar { height: 30px; flex: none; display: flex; align-items: flex-start; background: #0a0a0a; border-top: 1px solid #222; font-size: 14px; color: #dedede; position: relative; }
.nav { margin: 9px 0 0 23px; }
.nav2 { margin-left: 23px; margin-right: 45px; }
.tab-active { width: 41px; height: 27px; margin-top: -1px; background: #fff; border-radius: 0 0 5px 5px; color: #333; text-align: center; margin-right: 4px; padding-left: 2px; }
.tab-active span { display: inline-block; line-height: 21px; border-bottom: 2px solid #1f7a4a; padding: 0 1px; margin-top: 1px; letter-spacing: .5px; }
.tab { height: 20px; margin-top: 4px; text-align: center; line-height: 20px; border-left: 1px solid #555; flex: none; letter-spacing: .3px; }
.t49 { width: 49px; }
.t75 { width: 75px; }
.t76 { width: 76px; border-right: 1px solid #555; }
.addsheet { width: 36px; margin-left: 26px; text-align: center; font-size: 20px; line-height: 26px; color: #ddd; }
.hdots { position: absolute; left: 854px; top: 3px; width: 10px; text-align: center; color: #ddd; font-weight: 700; font-size: 14px; line-height: 20px; }
.hscroll { position: absolute; left: 881px; top: 10px; width: 530px; display: flex; align-items: center; height: 9px; }
.h-thumb { width: 485px; height: 9px; margin: 0 26px 0 3px; background: #9a9a9a; border-radius: 5px; }

/* status */
.status { height: 20px; flex: none; display: flex; align-items: center; background: #131313; border-top: 1px solid #333; font-size: 11.500px; color: #d8d8d8; padding-left: 10px; }
.st-ready { width: 42px; }
.st-macro { margin-right: 16px; }
.st-text { margin-left: 2px; letter-spacing: .3px; font-weight: 500; }
.st-space { flex: 1; }
.view { width: 36px; height: 19px; display: flex; align-items: center; justify-content: center; }
.view.on { background: #2a2a2a; }
.zm-minus { margin-left: 10px; width: 10px; color: #aaa; }
.zm-track { width: 93px; height: 1px; background: #9a9a9a; position: relative; }
.zm-thumb { position: absolute; left: 37px; top: -5px; width: 5px; height: 11px; background: #a8a8a8; }
.zm-plus { width: 24px; padding-left: 4px; color: #bbb; font-size: 13px; }
.zm-val { width: 35px; font-size: 11.500px; }

/* taskbar */
.taskbar { height: 45px; flex: none; display: flex; align-items: center; padding-bottom: 2px; color: #eee;
  background: linear-gradient(90deg, #1c1b3a 0, #38184f 230px, #1d1e42 440px, #2b1b4c 640px, #2e1a50 820px, #1f1e48 1100px, #1a1c3a 1430px); }
.weather { width: 343px; display: flex; align-items: center; padding-left: 18px; flex: none; }
.w-icon { position: relative; width: 30px; height: 24px; }
.w-badge { position: absolute; left: 11px; top: -3px; width: 15px; height: 15px; border-radius: 50%; background: #f08a9a; color: #222; font-size: 10px; line-height: 15px; text-align: center; font-weight: 400; }
.w-text { display: flex; flex-direction: column; font-size: 12px; line-height: 15px; }
.slot { width: 41px; height: 37px; flex: none; display: flex; align-items: center; justify-content: center; position: relative; }
.t-search { width: 204px; height: 30px; margin: 0 2.500px 0 4px; flex: none; border-radius: 15px; background: rgba(255,255,255,.13); display: flex; align-items: center; padding-left: 10px; position: relative; color: #c8c8d0; font-size: 13px; }
.t-search span { margin-left: 10px; }
.noodle { position: absolute; right: 8px; top: 1px; }
.apps { display: flex; }
.active { background: rgba(255,255,255,.07); border-radius: 5px; }
.dot { position: absolute; left: 17px; bottom: 0; width: 6px; height: 3px; border-radius: 2px; background: #9a9aa8; }
.dot.long { left: 11px; width: 18px; background: #8ab8d8; }
.b-count { position: absolute; right: 3px; top: 2px; width: 14px; height: 14px; border-radius: 50%; background: #8ab4c8; color: #222; font-size: 10px; line-height: 14px; text-align: center; font-weight: 400; }
.b-ko { position: absolute; right: 2px; top: 1px; width: 14px; height: 14px; border-radius: 50%; background: #4a5560; display: flex; align-items: center; justify-content: center; gap: 1px; }
.b-ko u { width: 4px; height: 5px; border: 1px solid #b8b8b8; }
.tray { flex: 1; display: flex; align-items: center; padding-left: 113px; }
.tr-ime { margin-left: 19px; font-size: 18px; line-height: 20px; font-weight: 300; width: 14px; }
.tr-wifi { margin-left: 14px; }
.tr-vol { margin-left: 7px; }
.tr-bat { margin-left: 8px; }
.tr-clock { width: 65px; margin-left: 7px; display: flex; flex-direction: column; align-items: flex-end; font-size: 11.500px; line-height: 15px; white-space: nowrap; flex: none; }
.tr-bell { margin-left: 8px; }
```
